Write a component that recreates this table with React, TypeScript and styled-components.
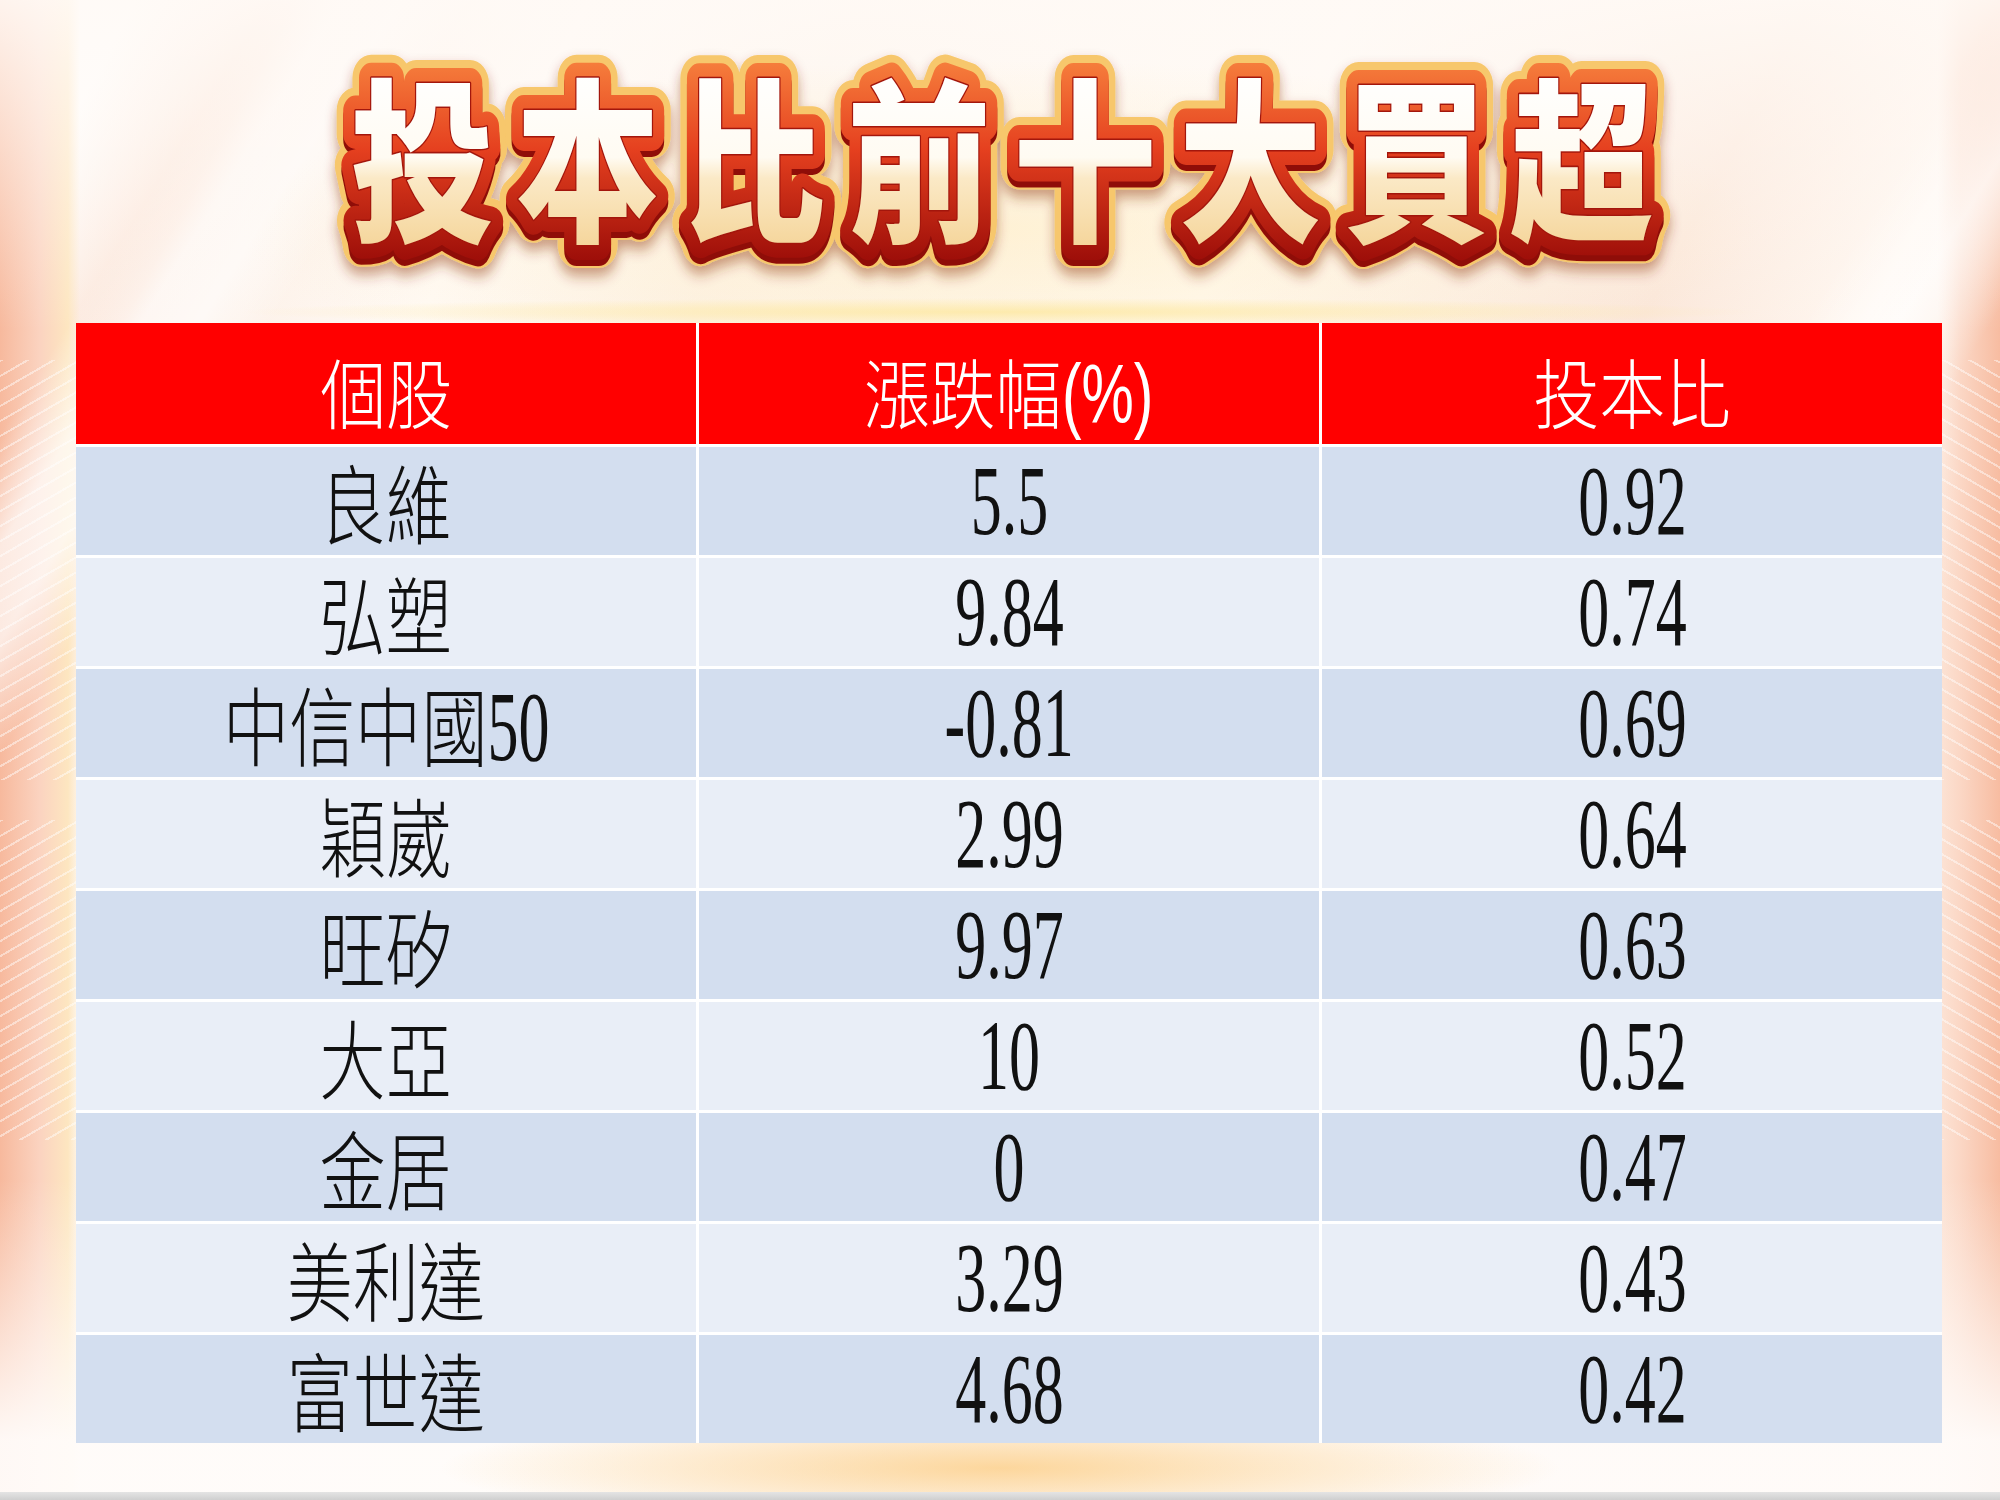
import React from "react";
import styled, { createGlobalStyle } from "styled-components";

const GlobalStyle = createGlobalStyle`
  html, body {
    margin: 0;
    padding: 0;
    background: #fdf3ec;
  }
`;

const rows: [string, string, string][] = [
  ["良維", "5.5", "0.92"],
  ["弘塑", "9.84", "0.74"],
  ["中信中國50", "-0.81", "0.69"],
  ["穎崴", "2.99", "0.64"],
  ["旺矽", "9.97", "0.63"],
  ["大亞", "10", "0.52"],
  ["金居", "0", "0.47"],
  ["美利達", "3.29", "0.43"],
  ["富世達", "4.68", "0.42"],
];

const headers = ["個股", "漲跌幅(%)", "投本比"];

const isHan = (ch: string) => /[\u3400-\u9fff\uf900-\ufaff]/.test(ch);

// split a label into latin runs and single han glyphs so each can be squeezed by its own amount
const SqueezedText = ({
  text,
  scale,
  hanSize,
  stretch,
  light,
}: {
  text: string;
  scale: number;
  hanSize: number;
  stretch: number;
  light?: boolean;
}) => {
  const parts: React.ReactNode[] = [];
  let run = "";
  Array.from(text).forEach((ch, i) => {
    if (isHan(ch)) {
      if (run) {
        parts.push(run);
        run = "";
      }
      parts.push(
        <Han key={i} $size={hanSize} $stretch={stretch} $light={light}>
          {ch}
        </Han>
      );
    } else {
      run += ch;
    }
  });
  if (run) parts.push(run);
  return <Squeeze $scale={scale}>{parts}</Squeeze>;
};

const Title = () => (
  <TitleSvg viewBox="0 0 1400 300" width="1400" height="300">
    <defs>
      <linearGradient id="titleFill" x1="0" y1="70" x2="0" y2="245" gradientUnits="userSpaceOnUse">
        <stop offset="0" stopColor="#ffffff" />
        <stop offset="0.5" stopColor="#fffbf2" />
        <stop offset="0.62" stopColor="#fbe9c6" />
        <stop offset="1" stopColor="#f5d69c" />
      </linearGradient>
      <linearGradient id="titleRed" x1="0" y1="55" x2="0" y2="265" gradientUnits="userSpaceOnUse">
        <stop offset="0" stopColor="#f7823e" />
        <stop offset="0.45" stopColor="#e5401f" />
        <stop offset="1" stopColor="#9a0c08" />
      </linearGradient>
      <filter id="titleShadow" x="-10%" y="-20%" width="120%" height="150%">
        <feDropShadow dx="0" dy="8" stdDeviation="7" floodColor="#8a2a08" floodOpacity="0.45" />
      </filter>
    </defs>
    <g transform="translate(713,0) scale(0.82,1)">
      <TitleText y="228" stroke="#f7c76c" strokeWidth="46" fill="#f7c76c" filter="url(#titleShadow)">
        投本比前十大買超
      </TitleText>
      <TitleText y="234" stroke="#8f0d08" strokeWidth="30" fill="#8f0d08">
        投本比前十大買超
      </TitleText>
      <TitleText y="228" stroke="url(#titleRed)" strokeWidth="30" fill="#c8261a">
        投本比前十大買超
      </TitleText>
      <TitleText y="228" stroke="#a3160c" strokeWidth="3" fill="url(#titleFill)">
        投本比前十大買超
      </TitleText>
    </g>
  </TitleSvg>
);

const App = () => {
  return (
    <>
      <GlobalStyle />
      <Page>
        <TitleBar>
          <Title />
        </TitleBar>
        <Table>
          {headers.map((h) => (
            <HeadCell key={h}>
              <SqueezedText text={h} scale={0.7} hanSize={76} stretch={1.24} light />
            </HeadCell>
          ))}
          {rows.map((row, r) =>
            row.map((value, c) => (
              <BodyCell key={`${r}-${c}`} $alt={r % 2 === 1}>
                <SqueezedText text={value} scale={0.62} hanSize={86} stretch={1.24} light />
              </BodyCell>
            ))
          )}
        </Table>
        <Footer />
      </Page>
    </>
  );
};

export default App;

const Page = styled.div`
  position: relative;
  width: 2000px;
  height: 1500px;
  overflow: hidden;
  display: flex;
  flex-direction: column;
  background:
    radial-gradient(ellipse 560px 58px at 1000px 1468px, rgba(252, 208, 140, 0.85), rgba(252, 208, 140, 0) 100%),
    radial-gradient(ellipse 760px 14px at 1000px 312px, rgba(253, 232, 160, 0.8), rgba(253, 232, 160, 0) 100%),
    radial-gradient(ellipse 760px 170px at 1000px 230px, rgba(255, 236, 190, 0.55), rgba(255, 236, 190, 0) 100%),
    linear-gradient(180deg, rgba(255, 250, 246, 0.9) 0px, rgba(255, 250, 246, 0) 330px, rgba(255, 250, 246, 0) 1180px, rgba(255, 252, 250, 0.95) 1440px),
    linear-gradient(122deg, rgba(255, 255, 255, 0) 0 230px, rgba(255, 255, 255, 0.7) 290px, rgba(255, 255, 255, 0.7) 340px, rgba(255, 255, 255, 0) 400px, rgba(255, 255, 255, 0) 1700px, rgba(255, 255, 255, 0.7) 1780px, rgba(255, 255, 255, 0) 1860px),
    repeating-linear-gradient(150deg, rgba(255, 255, 255, 0.45) 0 2px, rgba(255, 255, 255, 0) 2px 13px) 0 360px / 76px 420px no-repeat,
    repeating-linear-gradient(150deg, rgba(255, 255, 255, 0.45) 0 2px, rgba(255, 255, 255, 0) 2px 13px) 0 820px / 76px 320px no-repeat,
    repeating-linear-gradient(30deg, rgba(255, 255, 255, 0.45) 0 2px, rgba(255, 255, 255, 0) 2px 13px) 1941px 360px / 60px 420px no-repeat,
    repeating-linear-gradient(30deg, rgba(255, 255, 255, 0.45) 0 2px, rgba(255, 255, 255, 0) 2px 13px) 1941px 820px / 60px 320px no-repeat,
    linear-gradient(90deg, #f7b99d 0px, #fbd3c0 40px, #fde6c0 68px, rgba(253, 243, 236, 0) 80px, rgba(253, 243, 236, 0) 1938px, #fbd7c5 1960px, #f7bca1 2000px),
    linear-gradient(118deg, #fff 0px, #fff 120px, #fbe1d2 260px, #fdf1e8 360px, #fffaf5 520px, #fdf2e8 760px, #fffaf4 1200px, #fbe6d8 1600px, #fff8f2 1800px, #fce4d6 2000px);
`;

const TitleBar = styled.div`
  height: 323px;
  display: flex;
  justify-content: center;
  align-items: flex-start;
`;

const TitleSvg = styled.svg`
  display: block;
`;

const TitleText = styled.text`
  font-family: "Noto Sans CJK TC", "Noto Sans CJK SC", sans-serif;
  font-weight: 900;
  font-size: 175px;
  letter-spacing: 27px;
  text-anchor: middle;
  stroke-linejoin: round;
  paint-order: stroke fill;
`;

const Table = styled.div`
  margin-left: 76px;
  width: 1866px;
  display: grid;
  grid-template-columns: repeat(3, 620px);
  grid-auto-rows: 108px;
  grid-template-rows: 121px;
  column-gap: 3px;
  row-gap: 3px;
  background: #ffffff;
`;

const HeadCell = styled.div`
  box-sizing: border-box;
  padding-top: 14px;
  background: #ff0000;
  color: #ffffff;
  font-family: "Liberation Sans", "Noto Sans CJK TC", sans-serif;
  font-size: 84px;
  line-height: 106px;
  text-align: center;
  white-space: nowrap;
`;

const BodyCell = styled.div<{ $alt?: boolean }>`
  background: ${({ $alt }) => ($alt ? "#e9eef7" : "#d3deef")};
  color: #111111;
  font-family: "Liberation Serif", "Noto Sans CJK TC", serif;
  font-size: 100px;
  line-height: 108px;
  text-align: center;
  white-space: nowrap;
`;

const Squeeze = styled.span<{ $scale: number }>`
  display: inline-block;
  white-space: nowrap;
  transform: scaleX(${({ $scale }) => $scale});
  transform-origin: center;
`;

const Han = styled.span<{ $size: number; $stretch: number; $light?: boolean }>`
  display: inline-block;
  font-family: "Noto Sans CJK TC", sans-serif;
  font-weight: ${({ $light }) => ($light ? 300 : 400)};
  font-size: ${({ $size }) => $size}px;
  width: ${({ $stretch }) => $stretch}em;
  text-align: center;
  transform: scaleX(${({ $stretch }) => $stretch});
`;

const Footer = styled.div`
  margin-top: auto;
  height: 8px;
  background: linear-gradient(180deg, #e4e4e4, #cfcfcf);
`;
